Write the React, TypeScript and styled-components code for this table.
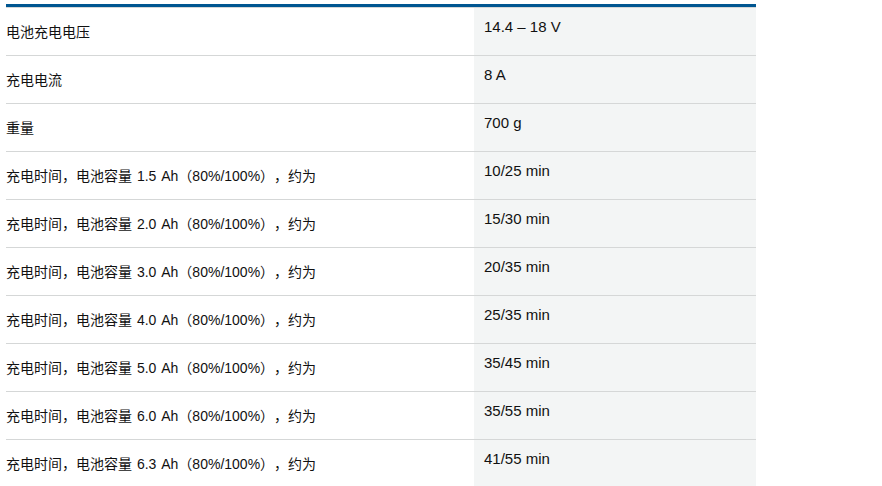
import React from "react";
import styled, { createGlobalStyle } from "styled-components";

const Global = createGlobalStyle`
  html, body { margin: 0; padding: 0; background: #ffffff; }
  body { font-family: "Liberation Sans", "Noto Sans CJK SC", sans-serif; color: #000; }
`;

const Page = styled.div`
  padding: 4px 0 0 6px;
`;

const Table = styled.div`
  width: 750px;
  border-top: 3px solid #005691;
  display: flex;
  flex-direction: column;
`;

const Row = styled.div`
  display: grid;
  grid-template-columns: 468px 282px;
  height: 48px;
  box-sizing: border-box;
  border-top: 1px solid #d5d7d7;
`;

const Label = styled.div`
  padding: 13px 0 0 0;
  font-family: "Liberation Sans", "Noto Sans CJK SC", sans-serif;
  font-size: 14px;
  line-height: 22px;
  color: #111;
  white-space: nowrap;
  text-spacing-trim: space-all;
  word-spacing: 1px;
`;

const Value = styled.div`
  background: #f3f5f5;
  padding: 8px 10px 0 10px;
  font-family: "Liberation Sans", "Noto Sans CJK SC", sans-serif;
  font-size: 15px;
  line-height: 22px;
  color: #111;
  white-space: nowrap;
`;

const rows: [string, string][] = [
  ["电池充电电压", "14.4 – 18 V"],
  ["充电电流", "8 A"],
  ["重量", "700 g"],
  ["充电时间，电池容量 1.5 Ah（80%/100%），约为", "10/25 min"],
  ["充电时间，电池容量 2.0 Ah（80%/100%），约为", "15/30 min"],
  ["充电时间，电池容量 3.0 Ah（80%/100%），约为", "20/35 min"],
  ["充电时间，电池容量 4.0 Ah（80%/100%），约为", "25/35 min"],
  ["充电时间，电池容量 5.0 Ah（80%/100%），约为", "35/45 min"],
  ["充电时间，电池容量 6.0 Ah（80%/100%），约为", "35/55 min"],
  ["充电时间，电池容量 6.3 Ah（80%/100%），约为", "41/55 min"],
];

export default function App() {
  return (
    <>
      <Global />
      <Page>
        <Table>
          {rows.map(([k, v]) => (
            <Row key={k}>
              <Label>{k}</Label>
              <Value>{v}</Value>
            </Row>
          ))}
        </Table>
      </Page>
    </>
  );
}
